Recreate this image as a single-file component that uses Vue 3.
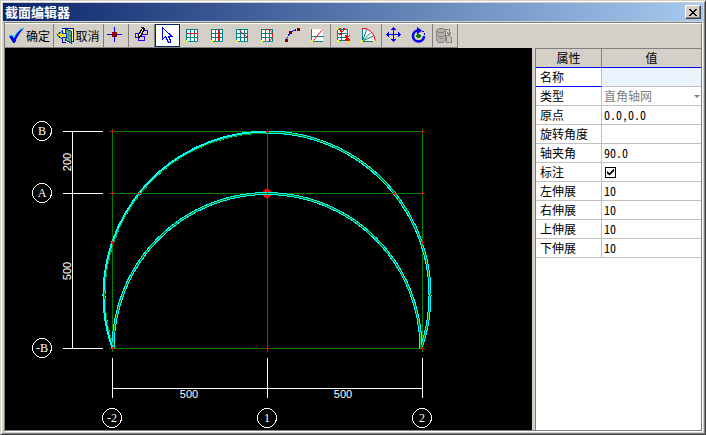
<script setup>
import { ref, reactive } from 'vue'

const tool = ref('select')

const fields = reactive([
  { id: 'name', label: '名称', type: 'text', value: '', active: true },
  { id: 'kind', label: '类型', type: 'select', value: '直角轴网' },
  { id: 'origin', label: '原点', type: 'text', value: '0.0,0.0' },
  { id: 'rotation', label: '旋转角度', type: 'text', value: '' },
  { id: 'angle', label: '轴夹角', type: 'text', value: '90.0' },
  { id: 'mark', label: '标注', type: 'check', value: true },
  { id: 'left', label: '左伸展', type: 'text', value: '10' },
  { id: 'right', label: '右伸展', type: 'text', value: '10' },
  { id: 'top', label: '上伸展', type: 'text', value: '10' },
  { id: 'bottom', label: '下伸展', type: 'text', value: '10' },
])

const columns = [
  { x: 112, name: '-2' },
  { x: 267, name: '1' },
  { x: 422, name: '2' },
]
const rows = [
  { y: 131, name: 'B' },
  { y: 193, name: 'A' },
  { y: 348, name: '-B' },
]
const nodes = [
  [112, 131], [267, 131], [422, 131],
  [112, 193], [139, 193], [394, 193], [422, 193],
  [112, 242], [422, 242],
  [112, 348], [267, 348], [422, 348],
]
</script>

<template>
  <main class="window">
    <header class="titlebar">
      <h1>截面编辑器</h1>
      <button class="close" type="button" aria-label="关闭">
        <svg width="8" height="7" viewBox="0 0 8 7" shape-rendering="crispEdges">
          <path d="M0 0h2v1h1v1h2v-1h1v-1h2v1h-1v1h-1v1h-1v1h1v1h1v1h1v1h-2v-1h-1v-1h-2v1h-1v1h-2v-1h1v-1h1v-1h1v-1h-1v-1h-1v-1h-1z" />
        </svg>
      </button>
    </header>

    <div class="client">
      <nav class="toolbar">
        <div class="group">
          <button type="button" class="wide">
            <svg width="17" height="17" viewBox="0 0 17 17">
              <path d="M1 9l3-1 2 3C8 6 12 2 16 1c-4 4-7 9-9 14l-2 1C4 13 3 11 1 9z" fill="#0000ff" />
              <path d="M1 9l3-1 2 3C8 6 12 2 16 1" fill="none" stroke="#00d8ff" />
              <path d="M2 10l4 6 2-3" fill="none" stroke="#000090" />
            </svg>
            <span>确定</span>
          </button>
        </div>
        <div class="group">
          <button type="button" class="wide cancel">
            <svg width="17" height="17" viewBox="0 0 17 17" shape-rendering="crispEdges">
              <path d="M5 1h11v13h-5" fill="#ffff80" stroke="#0000c0" />
              <path d="M8 2l6 2v12l-6-3z" fill="#509890" stroke="#004878" />
              <path d="M10 5h1v1h-1zM12 6h1v1h-1zM10 8h1v1h-1zM12 10h1v1h-1zM10 12h1v1h-1z" fill="#b0b0a0" />
              <path d="M0 8l5-4v2h4v4h-4v2z" fill="#ffe000" stroke="#0040e0" />
              <path d="M5 12v3h4" fill="none" stroke="#0000c0" />
            </svg>
            <span>取消</span>
          </button>
        </div>
        <div class="group">
          <button type="button" class="slim" aria-label="原点">
            <svg width="24" height="23" viewBox="0 0 24 23" shape-rendering="crispEdges">
              <path d="M3 10h15v1h-15zM10 3h1v15h-1z" fill="#0000ff" />
              <path d="M8 8h5v5h-5z" fill="#900000" />
            </svg>
          </button>
        </div>
        <div class="group">
          <button type="button" aria-label="编辑">
            <svg width="25" height="23" viewBox="0 0 25 23" shape-rendering="crispEdges">
              <path d="M6.500 9.500h3v4h-3zM11.500 6.500h7v4h-7zM9.500 12.500h6v4h-6z" fill="none" stroke="#3000ff" />
              <path d="M12 3h3v1h1v2h-1v2h-1v2h-1v2h-1v1h-1v1h-2v-4h1v-2h1v-2h1z" fill="#000" />
              <path d="M13 5h1v2h-1zM12 7h1v2h-1zM11 9h1v2h-1z" fill="#ffff70" />
              <path d="M12 4h1v1h-1zM10 10h1v2h-1z" fill="#fff" />
            </svg>
          </button>
        </div>
        <div class="group">
          <button type="button" aria-label="选择" :class="{ chosen: tool === 'select' }" @click="tool = 'select'">
            <svg width="23" height="21" viewBox="1 1 23 21" shape-rendering="crispEdges">
              <path d="M7.500 3.500v12l3-3 3 6h2v-2l-2-4h3.500z" fill="#fff" stroke="#0000ff" />
            </svg>
          </button>
          <button v-for="kind in ['row', 'column', 'slant', 'curve']" :key="kind" type="button" :aria-label="kind">
            <svg width="25" height="23" viewBox="0 0 25 23" shape-rendering="crispEdges">
              <path d="M6 5h12v13h-12z" fill="#fff" />
              <path d="M6.500 5.500h11v12h-11zM10.500 5v13M14.500 5v13M6 9.500h12M6 13.500h12" fill="none" stroke="#008080" />
              <path v-if="kind === 'row'" d="M7 9.500h10" class="red" />
              <path v-if="kind === 'column'" d="M13.500 6v11" class="red" />
              <path v-if="kind === 'slant'" d="M9.500 6.500l8 7" class="red smooth" />
              <path v-if="kind === 'curve'" d="M10.500 5.500h3c3 1 4 3 4 6s-2 6-6 6" class="red smooth" />
              <path d="M6 17h12v1h-12z" fill="#0090b0" />
              <path d="M6 16h2v2h-2z" fill="#ffff00" />
            </svg>
          </button>
          <button type="button" aria-label="圆弧">
            <svg width="25" height="23" viewBox="0 0 25 23" shape-rendering="crispEdges">
              <path d="M6.500 16C7 11 12 6 18 5.500" fill="none" stroke="#0000ff" stroke-dasharray="3 1" />
              <path d="M5 15h3v3h-3zM9 7h3v3h-3zM17 4h3v3h-3z" fill="#800000" />
            </svg>
          </button>
          <button type="button" aria-label="斜线">
            <svg width="25" height="23" viewBox="0 0 25 23" shape-rendering="crispEdges">
              <path d="M7 5h11v12h-11z" fill="#fff" />
              <path d="M6.500 5v13M6 12.500h13M6 17.500h12" fill="none" stroke="#008890" />
              <path d="M8.500 16.500l9-11" class="red smooth" />
              <path d="M6 16h2v2h-2z" fill="#ffff00" />
            </svg>
          </button>
        </div>
        <div class="group">
          <button type="button" aria-label="坐标">
            <svg width="25" height="23" viewBox="0 0 25 23" shape-rendering="crispEdges">
              <path d="M6 5h12v11h-12z" fill="#fff" />
              <path d="M6.500 5.500h10v11h-10zM10.500 5v12M6 9.500h11M6 13.500h11" fill="none" stroke="#008080" />
              <path d="M8 4.500h2M12 4.500h2M8.500 5l2.500 4M13.500 5l-4 5h-2M14 11.500h2M18 11.500h1M14.500 12l4 4M18.500 11.500l-4 4.500M14 16.500h2M17 16.500h2" class="red" />
              <path d="M5 4h2v2h-2zM6 16h2v2h-2zM16 17h2v2h-2z" fill="#ffff00" />
            </svg>
          </button>
          <button type="button" aria-label="极坐标">
            <svg width="25" height="23" viewBox="0 0 25 23">
              <path d="M6 17V5c7 0 12 5 12 12z" fill="#fff" />
              <path d="M6.500 17V5M6.500 17l4-11M6.500 17l8-8M6.500 17l11-5M6 17.500h12" fill="none" stroke="#008080" />
              <path d="M6 4.500h3c5 1 10 6 10 12" class="red" />
              <path d="M5 16h2v2h-2zM17 17h2v1h-2z" fill="#ffff00" />
            </svg>
          </button>
        </div>
        <div class="group">
          <button type="button" aria-label="移动">
            <svg width="25" height="23" viewBox="0 0 25 23" shape-rendering="crispEdges">
              <path d="M5 10h13v1h-13zM11 4h1v13h-1z" fill="#0000ff" />
              <path d="M11 3h1v1h1v1h1v1h-5v-1h1v-1h1zM11 18h1v-1h1v-1h1v-1h-5v1h1v1h1zM4 10v1h1v1h1v1h1v-5h-1v1h-1v1zM19 10v1h-1v1h-1v1h-1v-5h1v1h1v1z" fill="#0000ff" />
            </svg>
          </button>
          <button type="button" aria-label="旋转">
            <svg width="25" height="23" viewBox="0 0 25 23">
              <path d="M11 6.500A5.500 5.500 0 1 0 17 12" fill="none" stroke="#0000ff" stroke-width="2.500" />
              <path d="M10 3l5 3.500-5 4z" fill="#0000ff" />
              <path d="M15 7h2v1h-2zM17 9h1v2h-1z" fill="#0000ff" />
              <path d="M10 10h3v1h1v2h-1v1h-3v-1h-1v-2h1z" fill="#008000" />
            </svg>
          </button>
        </div>
        <div class="group">
          <button type="button" class="slim" aria-label="导出" disabled>
            <svg width="24" height="23" viewBox="0 0 24 23" shape-rendering="crispEdges">
              <path d="M3.500 6.500l2-2h5l2 2v10l-2 2h-5l-2-2z" fill="#b4b0a8" stroke="#848484" />
              <path d="M3.500 6.500l2 2h5l2-2M3.500 10.500l2 2h5l2-2M6 14.500h4" fill="none" stroke="#848484" />
              <path d="M12 5.500h4v5M14 8.500l2 2 2-2" fill="none" stroke="#848484" />
              <path d="M13.500 11.500h3l2 2v5h-5z" fill="#c8c4bc" stroke="#848484" />
            </svg>
          </button>
        </div>
      </nav>

      <div class="work">
        <section class="canvas">
          <svg viewBox="5 48 527 382" preserveAspectRatio="xMidYMid meet">
            <g shape-rendering="crispEdges" fill="none">
              <g stroke="#008000">
                <path v-for="r in rows" :key="r.name" :d="`M109 ${r.y + 0.5}H425`" />
                <path v-for="c in columns" :key="c.name" :d="`M${c.x + 0.5} 129V352`" />
              </g>
              <path d="M265 189h4v1h1v1h1v5h-1v1h-1v1h-4v-1h-1v-1h-1v-5h1v-1h1z" fill="#ff0000" />
              <g stroke="#00ffff" stroke-width="3">
                <path d="M113 348.500A163 163 0 1 1 421 348.500" />
                <path d="M113 348.500A154 155 0 0 1 421 348.500" />
              </g>
              <g stroke="#008000">
                <path d="M114 348.500A162 162 0 0 1 267 133" />
                <path d="M267 132A163 163 0 0 1 421 348.500" />
                <path d="M113 348.500A154 155 0 0 1 421 348.500" />
                <path d="M267.500 131V198" />
              </g>
              <path
                v-for="([x, y], i) in nodes"
                :key="i"
                :d="`M${x - 1} ${y + 0.5}h3M${x + 0.5} ${y - 1}v3`"
                stroke="#ff0000"
              />
              <g stroke="#ffffff">
                <path v-for="r in rows" :key="r.name" :d="`M63 ${r.y + 0.5}H103`" />
                <path v-for="c in columns" :key="c.name" :d="`M${c.x + 0.5} 358V398`" />
                <path d="M72.500 131V349M112 388.500H423" />
                <circle v-for="r in rows" :key="r.name" cx="42" :cy="r.y" r="9.500" />
                <circle v-for="c in columns" :key="c.name" :cx="c.x" cy="418" r="9.500" />
              </g>
            </g>
            <g class="axis-name">
              <text v-for="r in rows" :key="r.name" x="42" :y="r.y + 4">{{ r.name }}</text>
              <text v-for="c in columns" :key="c.name" :x="c.x" y="422">{{ c.name }}</text>
            </g>
            <g class="dimension">
              <text x="189" y="398">500</text>
              <text x="343" y="398">500</text>
              <text transform="translate(71 162) rotate(-90)">200</text>
              <text transform="translate(71 271) rotate(-90)">500</text>
            </g>
          </svg>
        </section>

        <aside class="panel">
          <table>
            <thead>
              <tr><th class="key" scope="col">属性</th><th scope="col">值</th></tr>
            </thead>
            <tbody>
              <tr v-for="f in fields" :key="f.id" :class="{ active: f.active }">
                <th class="key" scope="row"><label :for="f.id">{{ f.label }}</label></th>
                <td>
                  <input v-if="f.type === 'text'" :id="f.id" v-model="f.value" type="text" />
                  <div v-else-if="f.type === 'select'" class="choice">
                    <select :id="f.id" v-model="f.value" disabled>
                      <option>直角轴网</option>
                    </select>
                  </div>
                  <input v-else :id="f.id" v-model="f.value" type="checkbox" />
                </td>
              </tr>
            </tbody>
          </table>
        </aside>
      </div>
    </div>
  </main>
</template>

<style>
body {
  margin: 0;
}
</style>

<style scoped>
* {
  box-sizing: border-box;
}
.window {
  display: flex;
  flex-direction: column;
  min-height: 100vh;
  padding: 2px;
  background: #d4d0c8;
  border: 1px solid;
  border-color: #d4d0c8 #404040 #404040 #d4d0c8;
  box-shadow: inset 1px 1px #fff, inset -1px -1px #808080;
  font: 12px/16px "Liberation Sans", "Noto Sans CJK SC", sans-serif;
  color: #000;
}
.titlebar {
  display: flex;
  align-items: center;
  justify-content: space-between;
  height: 18px;
  padding: 0 2px;
  background: linear-gradient(90deg, #0a246a, #a6caf0);
}
h1 {
  margin: 0;
  font: bold 13px/18px "Noto Sans CJK SC", sans-serif;
  color: #fff;
}
button {
  display: flex;
  align-items: center;
  padding: 0;
  border: 0;
  background: none;
  font: inherit;
  color: inherit;
}
svg {
  display: block;
}
.red {
  fill: none;
  stroke: #ff0000;
}
.smooth {
  shape-rendering: auto;
}
.close {
  justify-content: center;
  width: 16px;
  height: 14px;
  background: #d4d0c8;
  border: 1px solid;
  border-color: #fff #404040 #404040 #fff;
  box-shadow: inset -1px -1px #808080;
}
.client {
  flex: 1;
  display: flex;
  flex-direction: column;
  margin: 1px 0 0 1px;
  border: 1px solid;
  border-color: #808080 #fff #fff #808080;
}
.toolbar {
  display: flex;
  height: 25px;
  border-top: 1px solid #fff;
  border-right: 1px solid #808080;
}
.group {
  display: flex;
  border-right: 1px solid #808080;
  border-bottom: 1px solid #808080;
}
.group button {
  justify-content: center;
  width: 25px;
}
.group .slim {
  width: 24px;
}
.group .wide {
  width: 48px;
  gap: 1px;
}
.group .cancel {
  width: 49px;
}
.group .chosen {
  background: #fff;
  border: 1px solid #0a246a;
}
.wide span {
  font: 12px/20px "Noto Sans CJK SC", sans-serif;
}
.work {
  flex: 1;
  display: flex;
  border: 1px solid #808080;
  border-width: 0 1px 1px 0;
}
.canvas {
  flex: 1;
  min-width: 0;
  background: #000;
}
.canvas svg {
  width: 100%;
  height: 100%;
}
.axis-name text,
.dimension text {
  fill: #fff;
  text-anchor: middle;
  font: 12px "Liberation Serif", serif;
}
.dimension text {
  font: 11px "Liberation Sans", sans-serif;
}
.panel {
  width: 169px;
  background: #fff;
  border-left: 3px solid #d4d0c8;
  box-shadow: inset 1px 0 #808080;
  padding-left: 1px;
}
table {
  width: 100%;
  border-collapse: separate;
  border-spacing: 0;
  table-layout: fixed;
}
th,
td {
  height: 19px;
  padding: 0;
  font: 12px/18px "Noto Sans CJK SC", sans-serif;
  border-bottom: 1px solid #c0c0c0;
}
th.key {
  width: 66px;
  border-right: 1px solid #c0c0c0;
}
thead th {
  height: 20px;
  background: #d4d0c8;
  border-top: 1px solid #808080;
  border-bottom: 1px solid #0000ff;
  text-align: center;
}
thead th.key {
  border-right-color: #808080;
}
tbody th {
  padding-left: 4px;
  text-align: left;
}
tbody .active th {
  border-bottom: 1px solid #0000ff;
}
tbody .active td {
  background: #ebf3ff;
}
input[type='text'],
select {
  display: block;
  width: 100%;
  height: 18px;
  padding: 0 2px;
  border: 0;
  outline: 0;
  background: none;
  appearance: none;
  color: inherit;
  font: 12px/18px "Noto Sans CJK SC", sans-serif;
  font-feature-settings: "hwid";
}
.choice {
  display: flex;
  align-items: center;
  padding-right: 1px;
}
select:disabled {
  color: #808080;
  opacity: 1;
}
.choice::after {
  content: '';
  border: 3px solid transparent;
  border-top-color: #808080;
  border-bottom: 0;
}
input[type='checkbox'] {
  display: block;
  width: 11px;
  height: 11px;
  margin: 0 3px;
  border: 1px solid #000;
  background: #fff;
  appearance: none;
}
input[type='checkbox']:checked::before {
  content: '';
  display: block;
  width: 7px;
  height: 7px;
  margin: 1px;
  background: #000;
  clip-path: polygon(0 35%, 35% 65%, 100% 0, 100% 40%, 35% 100%, 0 70%);
}
</style>
